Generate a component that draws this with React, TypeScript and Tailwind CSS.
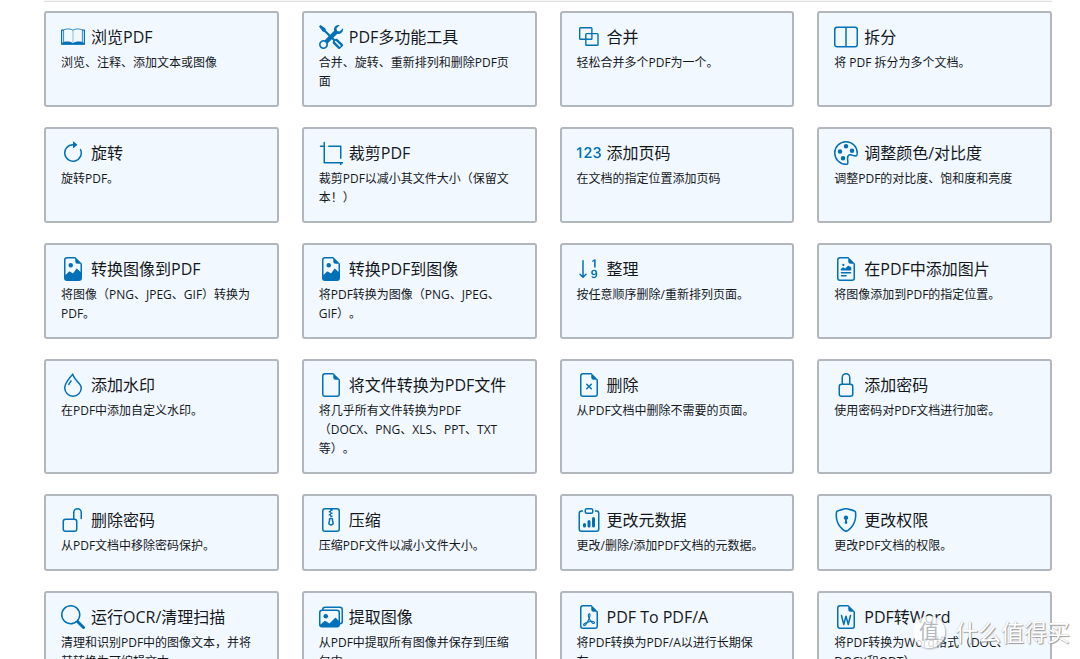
import React from "react";
import {
  BsTools,
  BsLayoutSplit,
  BsArrowClockwise,
  BsCrop,
  Bs123,
  BsPalette,
  BsFileEarmarkImage,
  BsSortNumericDown,
  BsFileEarmarkRichtext,
  BsDroplet,
  BsFileEarmark,
  BsFileEarmarkX,
  BsLock,
  BsUnlock,
  BsFileZip,
  BsClipboardData,
  BsShieldLock,
  BsSearch,
  BsImages,
  BsFileEarmarkPdf,
  BsFileEarmarkWord,
} from "react-icons/bs";

type IconType = React.ComponentType<{ className?: string }>;

function OpenBook({ className }: { className?: string }) {
  return (
    <svg viewBox="0 0 24 24" className={className} fill="none" stroke="currentColor">
      <path d="M2.6 5.2H.6v14h22.8v-14h-2" strokeWidth="1.2" strokeLinejoin="round" />
      <path d="M2.6 17.6V4.8C6 3.5 10 3.600 12 5.300c2-1.700 6-1.800 9.400-.5v12.800" strokeWidth=".8" />
      <path d="M12 5.300v12.300" strokeWidth=".7" opacity=".6" />
      <path d="M1 19.600v-1.700C4 15.900 10 16.200 12 18.200c2-2 8-2.300 11-.3v1.700z" fill="currentColor" stroke="none" />
    </svg>
  );
}

function MergeSquares({ className }: { className?: string }) {
  return (
    <svg viewBox="0 0 24 24" className={className} fill="none" stroke="currentColor" strokeWidth="1.4">
      <rect x="2.700" y="2.700" width="12.200" height="11.600" rx=".8" />
      <rect x="8.800" y="8.600" width="12.200" height="11.600" rx=".8" />
    </svg>
  );
}

const tools: { icon: IconType; title: string; text: string }[] = [
  { icon: OpenBook, title: "浏览PDF", text: "浏览、注释、添加文本或图像" },
  { icon: BsTools, title: "PDF多功能工具", text: "合并、旋转、重新排列和删除PDF页面" },
  { icon: MergeSquares, title: "合并", text: "轻松合并多个PDF为一个。" },
  { icon: BsLayoutSplit, title: "拆分", text: "将 PDF 拆分为多个文档。" },
  { icon: BsArrowClockwise, title: "旋转", text: "旋转PDF。" },
  { icon: BsCrop, title: "裁剪PDF", text: "裁剪PDF以减小其文件大小（保留文本！）" },
  { icon: Bs123, title: "添加页码", text: "在文档的指定位置添加页码" },
  { icon: BsPalette, title: "调整颜色/对比度", text: "调整PDF的对比度、饱和度和亮度" },
  { icon: BsFileEarmarkImage, title: "转换图像到PDF", text: "将图像（PNG、JPEG、GIF）转换为PDF。" },
  { icon: BsFileEarmarkImage, title: "转换PDF到图像", text: "将PDF转换为图像（PNG、JPEG、GIF）。" },
  { icon: BsSortNumericDown, title: "整理", text: "按任意顺序删除/重新排列页面。" },
  { icon: BsFileEarmarkRichtext, title: "在PDF中添加图片", text: "将图像添加到PDF的指定位置。" },
  { icon: BsDroplet, title: "添加水印", text: "在PDF中添加自定义水印。" },
  { icon: BsFileEarmark, title: "将文件转换为PDF文件", text: "将几乎所有文件转换为PDF（DOCX、PNG、XLS、PPT、TXT等）。" },
  { icon: BsFileEarmarkX, title: "删除", text: "从PDF文档中删除不需要的页面。" },
  { icon: BsLock, title: "添加密码", text: "使用密码对PDF文档进行加密。" },
  { icon: BsUnlock, title: "删除密码", text: "从PDF文档中移除密码保护。" },
  { icon: BsFileZip, title: "压缩", text: "压缩PDF文件以减小文件大小。" },
  { icon: BsClipboardData, title: "更改元数据", text: "更改/删除/添加PDF文档的元数据。" },
  { icon: BsShieldLock, title: "更改权限", text: "更改PDF文档的权限。" },
  { icon: BsSearch, title: "运行OCR/清理扫描", text: "清理和识别PDF中的图像文本，并将其转换为可编辑文本。" },
  { icon: BsImages, title: "提取图像", text: "从PDF中提取所有图像并保存到压缩包中。" },
  { icon: BsFileEarmarkPdf, title: "PDF To PDF/A", text: "将PDF转换为PDF/A以进行长期保存。" },
  { icon: BsFileEarmarkWord, title: "PDF转Word", text: "将PDF转换为Word格式（DOC、DOCX和ODT）。" },
];

function ToolCard({ icon: Icon, title, text }: (typeof tools)[number]) {
  return (
    <a
      href="#"
      className="block rounded-[3px] border-2 border-[#b2b6bd] bg-[#f2f8ff] pt-[11px] pr-[21px] pb-[14px] pl-[15px] text-[#14181d]"
    >
      <div className="mb-[3px] flex h-[26px] items-center gap-[6px]">
        <Icon className="size-6 shrink-0 text-[#0070b8]" />
        <h2 className="whitespace-nowrap text-[16px] leading-[26px]">{title}</h2>
      </div>
      <p className="text-[12px] leading-[19px]">{text}</p>
    </a>
  );
}

export default function App() {
  return (
    <div
      lang="zh-CN"
      className="relative h-screen overflow-hidden bg-white pr-[28px] pl-[44px] font-['Open_Sans','Noto_Sans_CJK_SC',sans-serif] [text-spacing-trim:space-all]"
    >
      <div className="h-[2px] border-b border-[#dedfe0] bg-[#f7f7f7]" />
      <main className="mt-[9px] grid grid-cols-4 gap-x-[23px] gap-y-5">
        {tools.map((tool) => (
          <ToolCard key={tool.title} {...tool} />
        ))}
      </main>
      <div className="pointer-events-none absolute right-[10px] bottom-[10px] flex items-center gap-[10px] text-white">
        <span className="flex size-[32px] items-center justify-center rounded-full bg-white/80 text-[20px] leading-none text-[#b4b7bc] shadow-[1px_1px_2px_#aaaaaa]">
          值
        </span>
        <span className="text-[23px] leading-[34px] [text-shadow:1px_1px_1px_#999999,0px_0px_1px_#aaaaaa]">什么值得买</span>
      </div>
    </div>
  );
}
